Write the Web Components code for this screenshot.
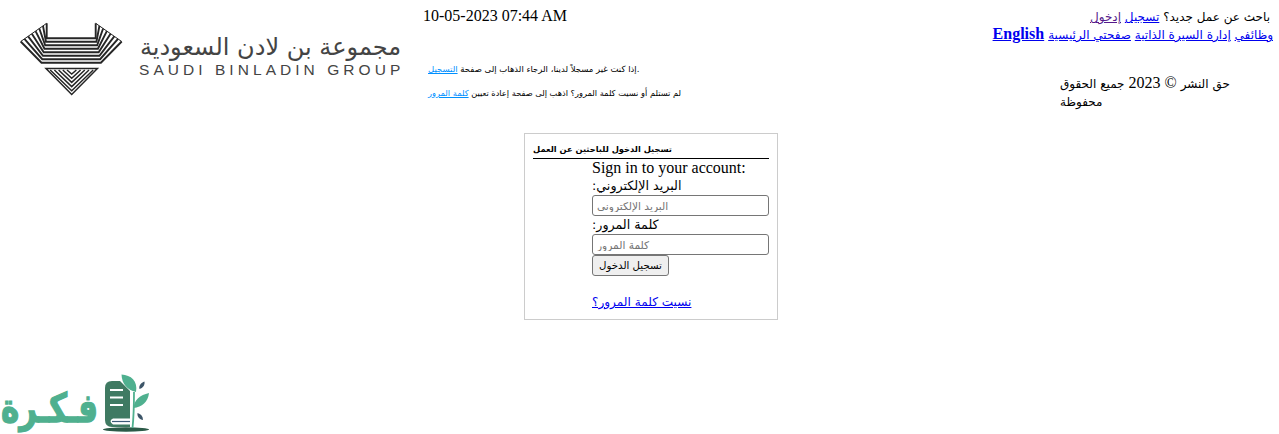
<!DOCTYPE html>
<html>
<head>
<meta charset="utf-8">
<title>Saudi Binladin Group</title>
<style>
  html, body { height: 100%; }
  body { margin: 0; background: #fff; color: #000; font: 16px/18px "Liberation Serif", "DejaVu Sans", serif; }
</style>
</head>
<body>
<sb-page>
  <sb-header slot="top">
    <sb-logo slot="logo"></sb-logo>
    <sb-notice slot="notice"></sb-notice>
    <sb-usernav slot="nav"></sb-usernav>
  </sb-header>
  <sb-login slot="main"></sb-login>
  <fikra-mark slot="foot"></fikra-mark>
</sb-page>

<script>
class SbPage extends HTMLElement {
  constructor() {
    super();
    const shadow = this.attachShadow({mode: "open"});
    shadow.innerHTML = `
      <style>
        :host { display: flex; flex-direction: column; height: 434px; overflow: hidden; }
        .main { display: flex; justify-content: center; padding: 13px 0 0 23px; }
        .foot { margin-top: auto; }
      </style>
      <slot name="top"></slot>
      <div class="main"><slot name="main"></slot></div>
      <div class="foot"><slot name="foot"></slot></div>
    `;
  }
}

class SbHeader extends HTMLElement {
  constructor() {
    super();
    const shadow = this.attachShadow({mode: "open"});
    shadow.innerHTML = `
      <style>
        :host { display: grid; grid-template-columns: 423px 1fr auto; height: 120px; }
      </style>
      <slot name="logo"></slot>
      <slot name="notice"></slot>
      <slot name="nav"></slot>
    `;
  }
}

class SbLogo extends HTMLElement {
  constructor() {
    super();
    const shadow = this.attachShadow({mode: "open"});

    // emblem stripes fan out from the inner notch to the outer edge
    let stripes = "";
    for (let k = 0; k <= 7; k++) {
      const t = k / 7;
      const x = 46.7 - 26 * t;
      const top = 23.3 + 18.2 * t;
      const bx = 46.7 - 5.2 * t;
      const by = 38.3 + 24.4 * t;
      stripes += `<polyline points="${x},${top} ${bx},${by} ${142.4 - bx},${by} ${142.4 - x},${top}"/>`;
    }
    let tri = "";
    for (let k = 1; k <= 5; k++) {
      const d = k * 4.2;
      tri += `<polyline points="${46 + d},70 71.7,${95 - d} ${97.4 - d},70"/>`;
    }

    shadow.innerHTML = `
      <style>
        :host { display: block; position: relative; }
        svg { display: block; position: absolute; left: 0; top: 0; }
        .word { position: absolute; left: 139px; width: 263px; white-space: nowrap; color: #444; }
        .ar { top: 32px; font: 24px/30px "DejaVu Sans", sans-serif; text-align: center; direction: rtl; }
        .en { top: 62px; font: 15.5px/16px "Liberation Sans", sans-serif; letter-spacing: 4.05px; }
      </style>
      <svg width="130" height="100" viewBox="0 0 130 100" fill="none" stroke="#262626" stroke-width="1.9" stroke-linejoin="miter">
        ${stripes}
        <path d="M20.7 41.5 46.7 23.3M121.7 41.5 95.7 23.3" stroke-width="1"/>
        <polygon points="46,68.5 97.4,68.5 71.7,94.5" stroke-width="1.5"/>
        <g stroke-width="1.5">${tri}</g>
      </svg>
      <div class="word ar">مجموعة بن لادن السعودية</div>
      <div class="word en">SAUDI BINLADIN GROUP</div>
    `;
  }
}

class SbNotice extends HTMLElement {
  constructor() {
    super();
    const shadow = this.attachShadow({mode: "open"});
    shadow.innerHTML = `
      <style>
        :host { display: block; }
        .date { padding-top: 7px; height: 17px; line-height: 18px; }
        .msg { width: 254px; margin-left: 5px; font: 8.25px/12px "DejaVu Sans", sans-serif; white-space: nowrap; direction: rtl; text-align: left; }
        .one { margin-top: 39px; font-size: 8.5px; }
        .two { margin-top: 12px; }
        a { color: #0090ff; }
      </style>
      <div class="date">10-05-2023 07:44 AM</div>
      <div class="msg one">.إذا كنت غير مسجلاً لدينا، الرجاء الذهاب إلى صفحة <a href="#">التسجيل</a></div>
      <div class="msg two">لم تستلم أو نسيت كلمة المرور؟ اذهب إلى صفحة إعادة تعيين <a href="#">كلمة المرور</a></div>
    `;
  }
}

class SbUsernav extends HTMLElement {
  constructor() {
    super();
    const shadow = this.attachShadow({mode: "open"});
    shadow.innerHTML = `
      <style>
        :host { display: block; width: 290px; padding-right: 6px; box-sizing: border-box; }
        .line { direction: rtl; text-align: right; white-space: nowrap; }
        .first { padding: 7px 3px 0 0; }
        .copy { direction: rtl; text-align: left; width: 171px; margin: 31px 0 0 71px; }
        .ar { font: 12px/1 "DejaVu Sans", sans-serif; }
        a { color: #00e; }
        a.seen { color: #551a8b; }
        b { font-weight: bold; }
      </style>
      <div class="line first"><span class="ar">باحث عن عمل جديد؟ <a href="#">تسجيل</a> <a class="seen" href="#">إدخول</a></span></div>
      <div class="line"><span class="ar"><a href="#">وظائفي</a> <a href="#">إدارة السيرة الذاتية</a> <a href="#">صفحتي الرئيسية</a></span> <a href="#"><b>English</b></a></div>
      <div class="copy"><span class="ar">حق النشر</span> © 2023 <span class="ar">جميع الحقوق</span><br><span class="ar">محفوظة</span></div>
    `;
  }
}

class SbLogin extends HTMLElement {
  constructor() {
    super();
    const shadow = this.attachShadow({mode: "open"});
    shadow.innerHTML = `
      <style>
        :host { display: block; width: 254px; height: 187px; box-sizing: border-box; border: 1px solid #ccc; padding: 8px; }
        h4 { margin: 0; height: 16px; font: bold 8.3px/15px "DejaVu Sans", sans-serif; direction: rtl; text-align: left; border-bottom: 1px solid #000; }
        .form { margin-left: 59px; }
        label { display: block; height: 18px; font: 12.7px/18px "DejaVu Sans", sans-serif; direction: rtl; text-align: left; }
        .title { height: 18px; }
        input { display: block; box-sizing: border-box; width: 100%; height: 21px; margin: 0; padding: 1px 4px; border: 1px solid #767676; border-radius: 3px; font: 10.6px "DejaVu Sans", sans-serif; direction: rtl; text-align: left; }
        input::placeholder { color: #757575; }
        button { display: block; box-sizing: border-box; width: 77px; height: 21px; padding: 0; border: 1px solid #767676; border-radius: 3px; background: #efefef; color: #000; font: 10.2px "DejaVu Sans", sans-serif; }
        .forgot { display: block; margin-top: 17px; font: 12.1px/18px "DejaVu Sans", sans-serif; direction: rtl; text-align: left; color: #00e; }
      </style>
      <h4>تسجيل الدخول للباحثين عن العمل</h4>
      <div class="form">
        <div class="title">Sign in to your account:</div>
        <label>البريد الإلكتروني:</label>
        <input type="text" placeholder="البريد الإلكتروني">
        <label>كلمة المرور:</label>
        <input type="password" placeholder="كلمة المرور">
        <button type="button">تسجيل الدخول</button>
        <a class="forgot" href="#">نسيت كلمة المرور؟</a>
      </div>
    `;
  }
}

class FikraMark extends HTMLElement {
  constructor() {
    super();
    const shadow = this.attachShadow({mode: "open"});
    shadow.innerHTML = `
      <style>
        :host { display: flex; align-items: flex-end; height: 64px; }
        .word { width: 98px; box-sizing: border-box; padding-left: 2px; font: bold 31px/40px "DejaVu Sans", sans-serif; color: #4fb08f; -webkit-text-stroke: 1px #4fb08f; direction: rtl; text-align: left; white-space: nowrap; transform: scaleY(1.3); transform-origin: left bottom; }
        svg { display: block; }
      </style>
      <div class="word">فـكـرة</div>
      <svg width="56" height="64" viewBox="98 370 56 64">
        <path d="M112 381H120L130 391V427H112Q105 427 105 420V388Q105 381 112 381Z" fill="#3f7a62"/>
        <path d="M110 390H123M110 397.5H123M110 405H123" stroke="#fff" stroke-width="2.2"/>
        <path d="M130 418.5H113Q108 421 113 424.5H130" fill="#fff"/>
        <path d="M112 421.5H130" stroke="#3d5a78" stroke-width="1.2"/>
        <ellipse cx="126" cy="429.5" rx="23" ry="2.2" fill="#2c5a48"/>
        <path d="M132.5 428C134 414 134 402 134 392" fill="none" stroke="#4fb08f" stroke-width="1.8"/>
        <path d="M121.5 374.5C131 375 138 381 136 392C127 390 122 384 121.5 374.5Z" fill="#4fb08f"/>
        <path d="M149 393C148 402 142 407 133.5 408C134 400 140 395 149 393Z" fill="#4fb08f"/>
        <path d="M144.5 381.5C145 385 143 388 139.5 389C138.5 385.5 141 383 144.5 381.5Z" fill="#3d5568"/>
        <path d="M137.5 413C141 414 143 416.5 143 420C139.5 419.5 137 417 137.5 413Z" fill="#3d5568"/>
      </svg>
    `;
  }
}

customElements.define("sb-page", SbPage);
customElements.define("sb-header", SbHeader);
customElements.define("sb-logo", SbLogo);
customElements.define("sb-notice", SbNotice);
customElements.define("sb-usernav", SbUsernav);
customElements.define("sb-login", SbLogin);
customElements.define("fikra-mark", FikraMark);
</script>
</body>
</html>
